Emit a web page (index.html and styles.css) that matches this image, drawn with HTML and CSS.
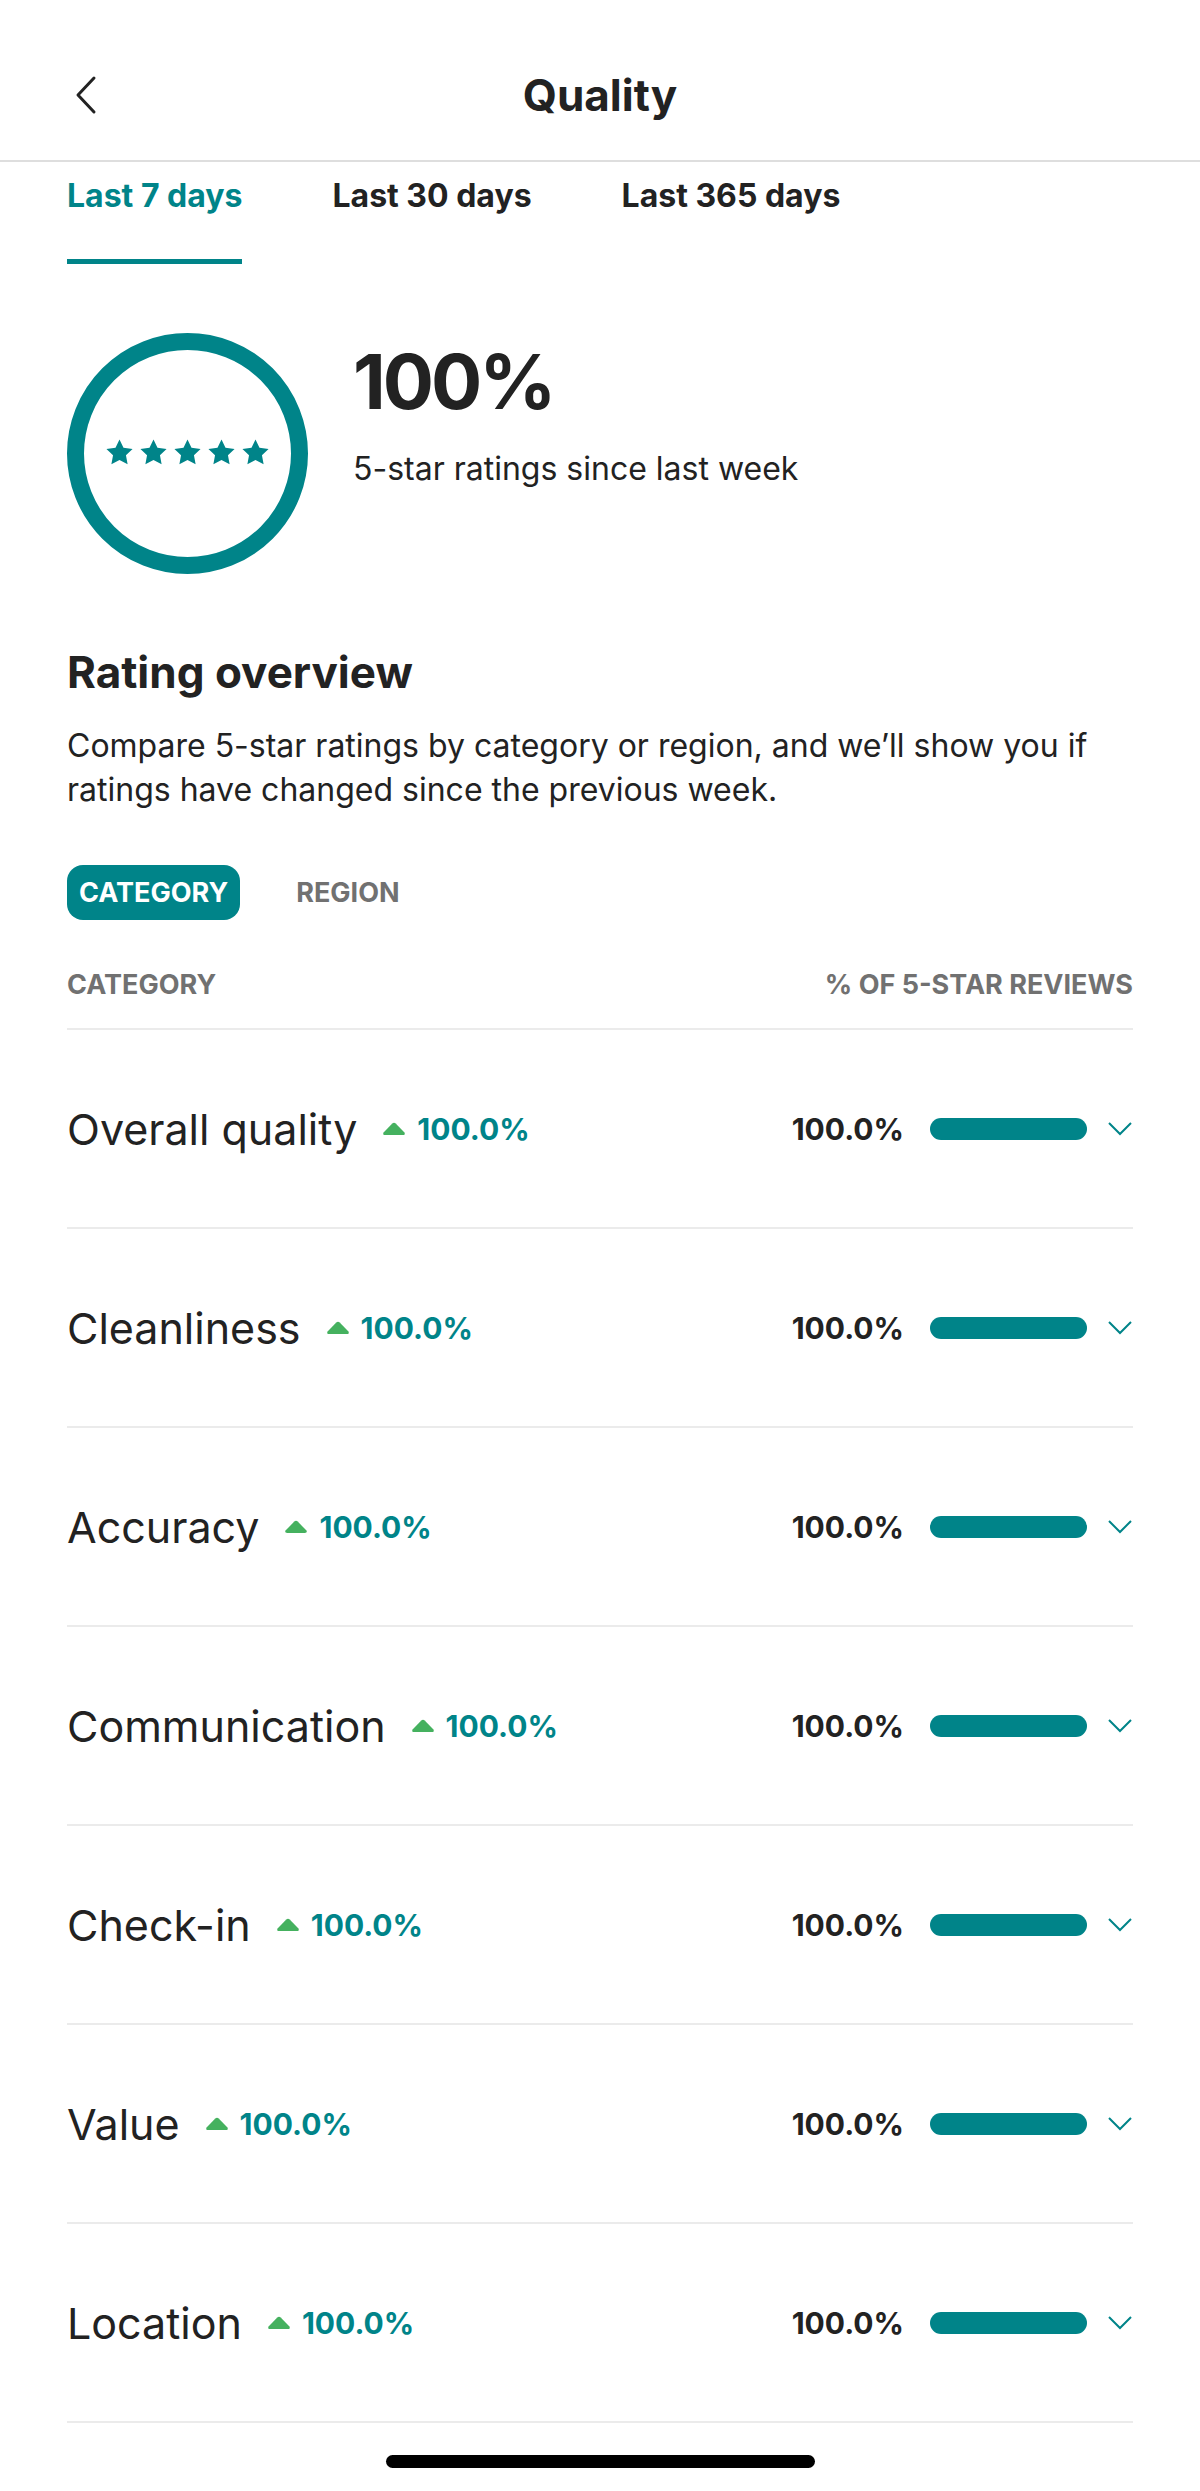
FILE: index.html
```html
<!DOCTYPE html>
<html lang="en">
<head>
    <meta charset="UTF-8">
    <meta name="viewport" content="width=device-width, initial-scale=1.0">
    <title>Quality</title>
    <link rel="stylesheet" href="styles.css">
</head>
<body>
    <header class="top-bar">
        <button class="back-btn" aria-label="Back">
            <svg width="24" height="40" viewBox="0 0 24 40"><path d="M20 3 L4 20 L20 37" fill="none" stroke="#222" stroke-width="3" stroke-linecap="round" stroke-linejoin="round"/></svg>
        </button>
        <h1>Quality</h1>
        <span></span>
    </header>

    <main class="page">
        <nav class="tabs">
            <a class="tab active">Last 7 days</a>
            <a class="tab">Last 30 days</a>
            <a class="tab">Last 365 days</a>
        </nav>

        <section class="summary">
            <div class="ring">
                <div class="stars">
                    <svg viewBox="0 0 24 24"><path d="M12 2.5l2.9 6 6.6.9-4.8 4.6 1.2 6.5L12 17.4l-5.9 3.1 1.2-6.5-4.8-4.6 6.6-.9z"/></svg>
                    <svg viewBox="0 0 24 24"><path d="M12 2.5l2.9 6 6.6.9-4.8 4.6 1.2 6.5L12 17.4l-5.9 3.1 1.2-6.5-4.8-4.6 6.6-.9z"/></svg>
                    <svg viewBox="0 0 24 24"><path d="M12 2.5l2.9 6 6.6.9-4.8 4.6 1.2 6.5L12 17.4l-5.9 3.1 1.2-6.5-4.8-4.6 6.6-.9z"/></svg>
                    <svg viewBox="0 0 24 24"><path d="M12 2.5l2.9 6 6.6.9-4.8 4.6 1.2 6.5L12 17.4l-5.9 3.1 1.2-6.5-4.8-4.6 6.6-.9z"/></svg>
                    <svg viewBox="0 0 24 24"><path d="M12 2.5l2.9 6 6.6.9-4.8 4.6 1.2 6.5L12 17.4l-5.9 3.1 1.2-6.5-4.8-4.6 6.6-.9z"/></svg>
                </div>
            </div>
            <div class="summary-text">
                <div class="big-pct">100%</div>
                <p>5-star ratings since last week</p>
            </div>
        </section>

        <section class="overview">
            <h2>Rating overview</h2>
            <p class="intro">Compare 5-star ratings by category or region, and we’ll show you if ratings have changed since the previous week.</p>

            <div class="toggle">
                <button class="pill active">CATEGORY</button>
                <button class="pill">REGION</button>
            </div>

            <div class="table-head">
                <span>CATEGORY</span>
                <span>% OF 5-STAR REVIEWS</span>
            </div>

            <div class="rows" id="rows"></div>
        </section>

        <div class="home-bar"></div>
    </main>

    <script>
        const categories = ['Overall quality', 'Cleanliness', 'Accuracy', 'Communication', 'Check-in', 'Value', 'Location'];

        const rows = document.getElementById('rows');
        categories.forEach(name => {
            const row = document.createElement('div');
            row.className = 'row';
            row.innerHTML = `
                <span class="label">${name}</span>
                <span class="delta">
                    <svg width="24" height="14" viewBox="0 0 24 14"><path d="M10.3 1.6 Q12 0 13.7 1.6 L22.2 10.2 Q24 13 20.8 13 L3.2 13 Q0 13 1.8 10.2 Z" fill="#45b15f"/></svg>
                    100.0%
                </span>
                <span class="score">
                    <span class="pct">100.0%</span>
                    <span class="bar"><span class="fill" style="width: 100%"></span></span>
                    <svg class="chev" width="26" height="16" viewBox="0 0 26 16"><path d="M2 2 L13 13 L24 2" fill="none" stroke="#008489" stroke-width="2"/></svg>
                </span>`;
            rows.appendChild(row);
        });
    </script>
</body>
</html>
```

FILE: styles.css
```css
body {
    font-family: 'Inter', 'Liberation Sans', sans-serif;
    background-color: #fff;
    color: #222;
    margin: 0;
    padding: 0;
}

.top-bar {
    display: grid;
    grid-template-columns: 1fr auto 1fr;
    align-items: center;
    height: 130px;
    padding-top: 30px;
    border-bottom: 2px solid #dedede;
}

.back-btn {
    justify-self: start;
    margin-left: 74px;
    padding: 0;
    border: none;
    background: none;
    display: flex;
}

.top-bar h1 {
    margin: 0;
    font-size: 44px;
    line-height: 50px;
    font-weight: 700;
}

.page {
    padding: 0 67px;
}

.tabs {
    display: flex;
    gap: 90px;
    padding-top: 16px;
}

.tab {
    font-size: 32px;
    line-height: 36px;
    font-weight: 700;
    color: #222;
    padding-bottom: 45px;
    border-bottom: 5px solid transparent;
}

.tab.active {
    color: #008489;
    border-bottom-color: #008489;
}

.summary {
    display: flex;
    align-items: flex-start;
    gap: 45px;
    margin-top: 69px;
}

.ring {
    width: 207px;
    height: 207px;
    border: 17px solid #008489;
    border-radius: 50%;
    display: flex;
    align-items: center;
    justify-content: center;
}

.stars {
    display: flex;
    gap: 1px;
    margin-top: -2px;
}

.stars svg {
    width: 33px;
    height: 33px;
    fill: #008489;
}

.summary-text {
    padding-top: 9px;
}

.big-pct {
    font-size: 76px;
    line-height: 78px;
    font-weight: 700;
    letter-spacing: -3px;
}

.summary-text p {
    margin: 31px 0 0;
    font-size: 32px;
    line-height: 36px;
}

.overview h2 {
    margin: 73px 0 0;
    font-size: 44px;
    line-height: 50px;
    font-weight: 700;
}

.intro {
    margin: 27px 0 0;
    font-size: 32px;
    line-height: 44px;
}

.toggle {
    display: flex;
    gap: 44px;
    margin-top: 53px;
}

.pill {
    font-family: inherit;
    height: 55px;
    padding: 0 12px;
    border: none;
    border-radius: 16px;
    background: none;
    font-size: 27px;
    font-weight: 700;
    color: #717171;
}

.pill.active {
    background-color: #008489;
    color: #fff;
}

.table-head {
    display: flex;
    justify-content: space-between;
    margin-top: 50px;
    padding-bottom: 28px;
    border-bottom: 2px solid #ebebeb;
    font-size: 27px;
    line-height: 30px;
    font-weight: 700;
    color: #717171;
}

.row {
    display: flex;
    align-items: center;
    height: 197px;
    border-bottom: 2px solid #ebebeb;
}

.label {
    font-size: 43px;
}

.delta {
    display: flex;
    align-items: center;
    gap: 11px;
    margin-left: 25px;
    font-size: 30px;
    font-weight: 700;
    color: #008489;
}

.score {
    display: flex;
    align-items: center;
    margin-left: auto;
}

.pct {
    font-size: 30px;
    font-weight: 700;
}

.bar {
    width: 157px;
    height: 22px;
    margin-left: 26px;
    border-radius: 11px;
    background-color: #ebebeb;
    overflow: hidden;
}

.fill {
    display: block;
    height: 100%;
    background-color: #008489;
}

.chev {
    margin-left: 20px;
}

.home-bar {
    width: 429px;
    height: 13px;
    margin: 32px auto 0;
    border-radius: 7px;
    background-color: #000;
}
```
